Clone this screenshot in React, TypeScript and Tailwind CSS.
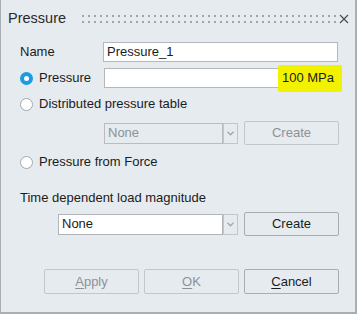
import { FC, ReactNode } from "react";

const font = "font-['Liberation_Sans',Arial,sans-serif]";

const Radio: FC<{ checked?: boolean }> = ({ checked }) =>
  checked ? (
    <div className="flex h-[13px] w-[13px] items-center justify-center rounded-full bg-[#1c9be0]">
      <div className="h-[5px] w-[5px] rounded-full bg-white" />
    </div>
  ) : (
    <div className="h-[13px] w-[13px] rounded-full border border-[#a3a8ad] bg-white" />
  );

const Chevron: FC = () => (
  <svg width="7" height="5" viewBox="0 0 7 5">
    <path d="M0.5 0.8 L3.5 3.8 L6.5 0.8" fill="none" stroke="#a2a7ab" strokeWidth="1.3" />
  </svg>
);

const Combo: FC<{ width: string; disabled?: boolean }> = ({ width, disabled }) => (
  <div className="flex h-[21px]">
    <div
      className={`flex items-center border pl-[3px] ${width} ${
        disabled ? "border-[#b9bdc1] text-[#8d9296]" : "border-[#b1b5b9] bg-white text-[#1b1b1b]"
      }`}
    >
      None
    </div>
    <div className="flex w-[15px] items-center justify-center border border-[#c2c6ca]">
      <Chevron />
    </div>
  </div>
);

const Button: FC<{ children: ReactNode; disabled?: boolean; h?: string }> = ({ children, disabled, h = "h-[24px]" }) => (
  <div
    className={`flex w-[95px] items-center justify-center rounded-[2px] border ${h} ${
      disabled ? "border-[#c3c7cb] text-[#8d9296]" : "border-[#a9adb1] text-[#1b1b1b]"
    }`}
  >
    {children}
  </div>
);

const App: FC = () => {
  return (
    <div
      className={`flex h-[314px] w-[357px] flex-col border-b-2 border-l border-r-2 border-[#a9aeb3] bg-[#e5ebef] text-[13px] text-[#1b1b1b] ${font}`}
    >
      {/* title bar */}
      <div className="flex h-[38px] items-center pl-[7px]">
        <span className="w-[74px] text-[14.5px] text-[#2a2a2a]">Pressure</span>
        <svg width="254" height="8" className="mb-[1px]">
          <defs>
            <pattern id="grip" width="6" height="6" patternUnits="userSpaceOnUse">
              <rect width="2" height="2" fill="#9ea4a9" />
            </pattern>
          </defs>
          <rect width="254" height="8" fill="url(#grip)" />
        </svg>
        <svg width="10" height="10" viewBox="0 0 10 10" className="ml-[3px] mb-[1px]">
          <path d="M1 1 L9 9 M9 1 L1 9" stroke="#4a4e52" strokeWidth="1.2" />
        </svg>
      </div>

      <div className="flex flex-col pl-[19px]">
        {/* name */}
        <div className="mt-[4px] flex h-[20px] items-center">
          <span className="w-[83px]">Name</span>
          <div className="flex h-[20px] w-[235px] items-center border border-[#b4b8bc] bg-white pl-[3px]">
            Pressure_1
          </div>
        </div>

        {/* pressure */}
        <div className="mt-[6px] flex h-[20px] items-center">
          <Radio checked />
          <span className="ml-[6px] w-[65px]">Pressure</span>
          <div className="relative flex h-[20px] w-[235px] items-center justify-end border border-[#b4b8bc] bg-white pr-[4px]">
            <span className="absolute -right-[4px] -top-[4px] h-[27px] w-[64px] rounded-[2px] bg-[#f2f200]" />
            <span className="relative">100 MPa</span>
          </div>
        </div>

        {/* distributed */}
        <div className="mt-[6px] flex h-[20px] items-center">
          <Radio />
          <span className="ml-[6px]">Distributed pressure table</span>
        </div>

        <div className="mt-[7px] flex h-[24px] items-center pl-[84px]">
          <Combo width="w-[119px]" disabled />
          <div className="ml-[6px]">
            <Button disabled>Create</Button>
          </div>
        </div>

        {/* from force */}
        <div className="mt-[7px] flex h-[20px] items-center">
          <Radio />
          <span className="ml-[6px]">Pressure from Force</span>
        </div>

        <div className="mt-[16px] flex h-[20px] items-center">Time dependent load magnitude</div>

        <div className="mt-[4px] flex h-[24px] items-center pl-[38px]">
          <Combo width="w-[165px]" />
          <div className="ml-[6px]">
            <Button>Create</Button>
          </div>
        </div>

        {/* footer */}
        <div className="mt-[33px] flex gap-[5px] pl-[24px]">
          <Button disabled h="h-[25px]">
            <span className="underline underline-offset-2">A</span>pply
          </Button>
          <Button disabled h="h-[25px]">
            <span className="underline underline-offset-2">O</span>K
          </Button>
          <Button h="h-[25px]">
            <span className="underline underline-offset-2">C</span>ancel
          </Button>
        </div>
      </div>
    </div>
  );
};

export default App;
